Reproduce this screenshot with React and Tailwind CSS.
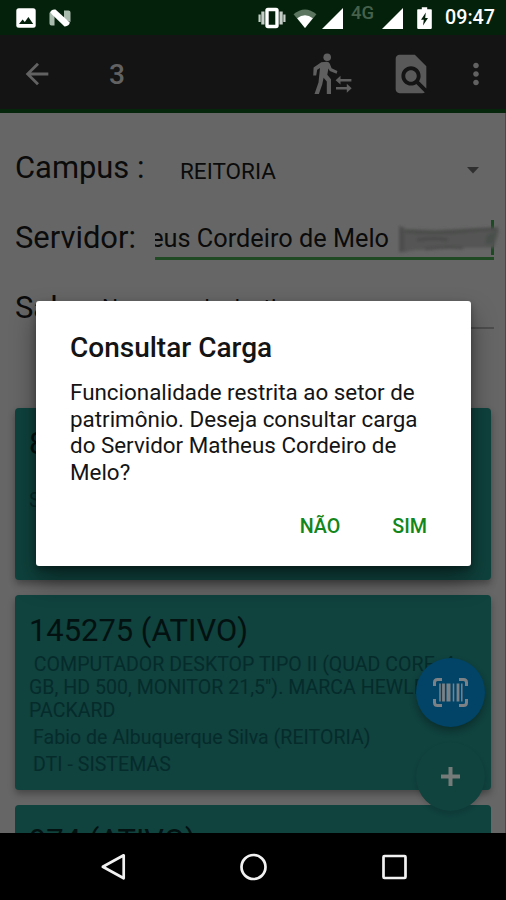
import { MdArrowBack, MdFindInPage, MdMoreVert } from 'react-icons/md';

const items = [
  {
    id: '145275',
    title: '145275 (ATIVO)',
    description: ['\u00a0COMPUTADOR DESKTOP TIPO II (QUAD CORE, 4', 'GB, HD 500, MONITOR 21,5"). MARCA HEWLETT', 'PACKARD'],
    owner: 'Fabio de Albuquerque Silva (REITORIA)',
    place: 'DTI - SISTEMAS',
  },
];

function StatusBar() {
  return (
    <div className="h-[35px] shrink-0 bg-[#04220b] flex items-center text-white">
      {/* Notifications */}
      <svg className="ml-4 w-5 h-5" viewBox="0 0 20 20">
        <rect x="0.3" y="0.3" width="19.4" height="19.4" rx="2.5" fill="#fff" />
        <path d="M3 16l3.6-4.6 2.2 2.5 3.6-5 4.8 7.1z" fill="#04220b" />
      </svg>
      <svg className="ml-[13px] w-[22px] h-[18px]" viewBox="0 0 22 18">
        <path d="M0.5 3.5L5.5 6V16.5H2.5Q0.5 16.5 0.5 14.5zM15 1.5h4.5Q21.5 1.5 21.5 3.5V13L15 10z" fill="#a9bbad" />
        <path d="M1 3.5Q2.5 0 6.5 0.6L20.8 13.6Q20 17.6 15.5 17.4z" fill="#fff" />
      </svg>

      {/* Connectivity, battery and clock */}
      <svg className="ml-[187px] w-7 h-[22px]" viewBox="0 0 28 22">
        <path d="M0.500 7.500h2.200v7.500H0.500zM3.300 4.500h3.200v13h-3.200zM21.500 4.500h3.200v13h-3.200zM25.300 7.500h2.200v7.500h-2.200z" fill="#c5cec7" />
        <rect x="9" y="2.500" width="10" height="17" rx="1" fill="none" stroke="#fff" strokeWidth="3.400" />
      </svg>
      <svg className="ml-[6px] mt-[1px] w-[26px] h-[21px]" viewBox="0 0 26 22">
        <path d="M1 6.5Q13-3.5 25 6.5L13 21z" fill="#5b7560" />
        <path d="M4.8 10.8Q13 4.5 21.2 10.8L13 21z" fill="#fff" />
      </svg>
      <svg className="ml-[4px] mt-[2px] w-[22px] h-[21px]" viewBox="0 0 22 21">
        <path d="M21 0v21H0z" fill="#fff" />
      </svg>
      <span className="ml-[7px] -mt-[9px] w-6 text-[18.5px] leading-5 font-medium text-[#46614b]">4G</span>
      <svg className="ml-[7px] mt-[2px] w-[22px] h-[21px]" viewBox="0 0 22 21">
        <path d="M21 0v21H0z" fill="#fff" />
      </svg>
      <svg className="ml-[13px] w-[15px] h-[22px]" viewBox="0 0 15 22">
        <path d="M4.8 0.3h5.4v2H14a.8.8 0 0 1 .8.8v18a.8.8 0 0 1-.8.8H1a.8.8 0 0 1-.8-.8v-18a.8.8 0 0 1 .8-.8h3.8z" fill="#fff" />
        <path d="M8.8 5.5L4 12.8h2.8L6 18.5l5-7.5H8.2z" fill="#04220b" />
      </svg>
      <span className="ml-[13px] mt-[1px] text-[19.7px] leading-6 font-medium">09:47</span>
    </div>
  );
}

function WalkIcon() {
  return (
    <svg className="w-10 h-[42px]" viewBox="0 0 40 42" fill="#5f5f5f">
      <circle cx="15.2" cy="4.2" r="3.8" />
      <path d="M9.3 9.3L14.8 8.8Q17 8.8 17.8 10.8L19.6 15.3 25.4 18 24.6 20.8 17.800 18 16.4 15.6 15.3 21.7 19 26.2V41H14.800V28.6L11.6 24.8 10.2 31.5 6.900 41H2.5L6.500 29.600 8 15 5.2 16.8 4.2 22.6H1.2L1.6 14.5z" />
      <path d="M28.5 22.8v3.1H39.4v2.6H28.5v3.1l-4.9-4.4zM34.8 30.8v3.2H24v2.6h10.8v3.2l4.9-4.5z" />
    </svg>
  );
}

function Toolbar() {
  return (
    <header className="h-[78px] shrink-0 bg-[#141414] border-b-4 border-[#06260b] pt-[4px] flex items-center text-[#626262]">
      <MdArrowBack className="ml-[20px] size-[34px]" />
      <h1 className="ml-[55px] mt-[1px] w-5 text-[28.1px] leading-8 font-medium">3</h1>
      <div className="ml-[183px]">
        <WalkIcon />
      </div>
      <MdFindInPage className="ml-[36px] size-[46px] text-[#595959]" />
      <MdMoreVert className="ml-[25px] size-[34px]" />
    </header>
  );
}

function Field({ label, children }) {
  return (
    <div className="flex items-center h-[70px]">
      <label className="w-[140px] shrink-0 text-[30.9px] leading-9 whitespace-nowrap">{label}</label>
      {children}
    </div>
  );
}

function Filters() {
  return (
    <section className="h-[295px] shrink-0 pl-[15px] pr-[11px] pt-[20px] text-[#0b0b0b]">
      <Field label="Campus :">
        <div className="ml-[25px] mt-[5px] flex-1 flex items-center justify-between text-[22.5px] leading-7">
          REITORIA
          <svg className="mr-[15px] w-3 h-[7px]" viewBox="0 0 12 7">
            <path d="M0 0h12L6 6.5z" fill="#2f2f2f" />
          </svg>
        </div>
      </Field>
      <Field label="Servidor:">
        <div className="relative flex-1 h-[46px] mt-[11px] border-b-[3px] border-[#1f4a23] self-start">
          <div className="w-[234px] mt-[9px] flex justify-end overflow-hidden text-[25.3px] leading-[32px] whitespace-nowrap">
            <span>eus Cordeiro de Melo</span>
          </div>
          {/* Cursor and smudged surname */}
          <div className="absolute right-0 top-[6px] w-[3px] h-[35px] bg-[#1c4a22]" />
          <svg className="absolute left-[240px] top-[8px] w-[110px] h-[36px]" viewBox="0 0 110 36">
            <defs>
              <filter id="smudge" x="-10%" y="-20%" width="120%" height="140%">
                <feGaussianBlur stdDeviation="1.5" />
              </filter>
            </defs>
            <g filter="url(#smudge)">
              <path d="M4 3L9 7 40 8 103 5 104 10 99 26 70 26 20 28 4 31z" fill="#545554" />
              <path d="M4 5h5l1 24H4z" fill="#4e4e4e" />
              <path d="M10 9Q40 12 70 9T102 8" stroke="#4a4b4a" strokeWidth="3" fill="none" />
              <path d="M22 18Q40 15 53 18" stroke="#4a4a4a" strokeWidth="3" fill="none" />
              <path d="M30 27Q50 24 68 26" stroke="#4d4d4d" strokeWidth="3" fill="none" />
              <path d="M92 13L102 9 98 22 90 22z" fill="#4a504b" />
            </g>
          </svg>
        </div>
      </Field>
      <Field label="Sala:">
        <div className="h-[36px] mt-[6px] flex-1 -ml-[53px] border-b-2 border-[#4d4d4d] text-[22.5px] leading-[29px]">Novo em de destino</div>
      </Field>
    </section>
  );
}

function ItemCard({ item }) {
  return (
    <article className="h-[195px] shrink-0 rounded-[4px] bg-[#10423e] pl-[14px] pt-[18px] shadow-[0_4px_7px_rgba(0,0,0,0.3)] text-[#062b2b] text-[19.6px] leading-[23px] whitespace-nowrap overflow-hidden">
      <h2 className="text-[30.9px] leading-9 text-[#031110]">{item.title}</h2>
      <div className="mt-[4px]">
        {item.description.map((line) => (
          <p key={line}>{line}</p>
        ))}
      </div>
      <p className="ml-[4px] mt-[4px]">{item.owner}</p>
      <p className="ml-[4px] mt-[4px]">{item.place}</p>
    </article>
  );
}

function Dialog() {
  return (
    <div className="absolute left-[36px] top-[301px] w-[435px] h-[265px] bg-white rounded-[3px] pl-[34px] pt-[31px] text-[#141414] shadow-[0_14px_26px_rgba(0,0,0,0.42),0_3px_6px_rgba(0,0,0,0.3)]">
      <h2 className="text-[28px] leading-8 font-medium">Consultar Carga</h2>
      <p className="mt-[15px] text-[22.4px] leading-[26.7px] whitespace-nowrap">
        Funcionalidade restrita ao setor de
        <br />
        patrimônio. Deseja consultar carga
        <br />
        do Servidor Matheus Cordeiro de
        <br />
        Melo?
      </p>
      <div className="mt-[29px] pr-[44px] flex justify-end gap-[52px] text-[19.7px] leading-6 font-medium text-[#12861a]">
        <button>NÃO</button>
        <button>SIM</button>
      </div>
    </div>
  );
}

function BarcodeButton() {
  return (
    <button className="size-[69px] rounded-full bg-[#014468] flex items-center justify-center shadow-[0_4px_7px_rgba(0,0,0,0.3)]">
      <svg className="w-[35px] h-[29px]" viewBox="0 0 35 29" stroke="#7b8184" fill="none">
        <path d="M1.5 8V4.5Q1.5 1.5 4.5 1.5H9M26 1.5h4.5Q33.5 1.5 33.5 4.5V8M33.5 21v3.5q0 3-3 3H26M9 27.5H4.5q-3 0-3-3V21" strokeWidth="3" />
        <path d="M7 5.5v18M20.5 5.5v18M28.8 5.5v18" strokeWidth="1.5" />
        <path d="M10.5 5.5v18M25 5.5v18" strokeWidth="2.8" />
        <path d="M15.5 5.5v18" strokeWidth="4" />
      </svg>
    </button>
  );
}

function NavBar() {
  return (
    <nav className="h-[67px] shrink-0 bg-black flex items-center">
      <svg className="ml-[100px] w-7 h-7" viewBox="0 0 28 28" fill="none" stroke="#f2f2f2" strokeWidth="2.7">
        <path d="M23.7 2.3v23L2.8 13.8z" strokeLinejoin="round" />
      </svg>
      <svg className="ml-[111px] w-7 h-7" viewBox="0 0 28 28" fill="none" stroke="#f2f2f2" strokeWidth="2.7">
        <circle cx="14.5" cy="14" r="12" />
      </svg>
      <svg className="ml-[114px] w-7 h-7" viewBox="0 0 28 28" fill="none" stroke="#f2f2f2" strokeWidth="2.7">
        <rect x="2.5" y="3" width="22" height="22" rx="1" />
      </svg>
    </nav>
  );
}

export default function App() {
  return (
    <div className="relative w-[506px] h-[900px] overflow-hidden flex flex-col font-['Roboto',sans-serif] bg-[#666666]">
      <StatusBar />
      <Toolbar />
      <main className="relative h-[720px] shrink-0 overflow-hidden flex flex-col border-r border-[#4a4a4d]">
        <Filters />
        <div className="pl-[15px] pr-[14px] flex flex-col gap-[15px]">
          <article className="h-[172px] shrink-0 rounded-[4px] bg-[#0f423d] pl-[14px] pt-[18px] shadow-[0_4px_7px_rgba(0,0,0,0.3)]">
            <h2 className="text-[30.9px] leading-9 text-[#031110]">8</h2>
            <p className="mt-[27px] text-[19.7px] leading-[23px] text-[#062b2b]">S</p>
          </article>
          {items.map((item) => (
            <ItemCard key={item.id} item={item} />
          ))}
          <article className="h-[195px] shrink-0 rounded-[4px] bg-[#10423e] pl-[14px] pt-[18px]">
            <h2 className="text-[30.9px] leading-9 text-[#031110]">974 (ATIVO)</h2>
          </article>
        </div>

        {/* Floating actions */}
        <div className="absolute left-[416px] top-[545px] flex flex-col gap-[15px]">
          <BarcodeButton />
          <button className="size-[69px] rounded-full bg-[#10423e] flex items-center justify-center text-[#747b79] shadow-[0_3px_5px_rgba(0,0,0,0.13)]">
            <svg className="w-[19px] h-[19px]" viewBox="0 0 19 19" stroke="currentColor" strokeWidth="4">
              <path d="M9.5 0v19M0 9.5h19" />
            </svg>
          </button>
        </div>
      </main>
      <NavBar />
      <Dialog />
    </div>
  );
}
